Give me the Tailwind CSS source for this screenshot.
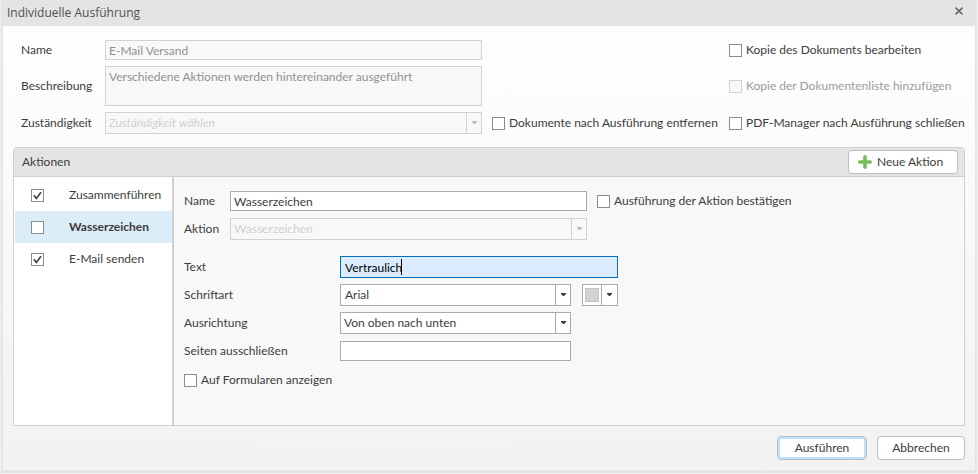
<!DOCTYPE html>
<html lang="de">
<head>
<meta charset="utf-8">
<title>Individuelle Ausführung</title>
<meta name="viewport" content="width=device-width, initial-scale=1">
<script src="https://cdn.jsdelivr.net/npm/@tailwindcss/browser@4"></script>
</head>
<body class="bg-[#f0f0f0] font-['Lato','Open_Sans',sans-serif] text-xs text-[#3c3c3c]">
<svg class="hidden" aria-hidden="true">
  <symbol id="arrow" viewBox="0 0 5 3"><path d="M0 0h5v1L3 3H2L0 1z" fill="currentColor"/></symbol>
</svg>
<div class="flex min-h-screen flex-col px-px pb-px">
<main class="flex flex-1 flex-col border-x-2 border-b-3 border-[#e4e4e4] bg-linear-to-b from-white to-[#f2f2f2]">
  <header class="flex h-[26px] items-center justify-between bg-[#e4e4e4] pr-2 pl-1 text-[#505050]">
    <h1 class="font-['Open_Sans','Noto_Sans',sans-serif]">Individuelle Ausführung</h1>
    <button type="button" aria-label="Schließen" class="mb-1 flex h-4 w-4 items-center justify-center">
      <svg class="h-2 w-2" viewBox="0 0 8 8"><path d="M.5.7l7 6.6M7.5.7L.5 7.3" stroke="#666" stroke-width="1.6"/></svg>
    </button>
  </header>

  <form class="flex flex-1 flex-col px-[10px] pb-[10px]">
    <div class="grid grid-cols-[84px_1fr_247px_236px] items-center gap-y-[6px] pt-[14px] pl-2">
      <label for="name">Name</label>
      <input id="name" disabled value="E-Mail Versand" class="h-5 w-full border border-[#d2d2d2] bg-[#f8f8f8] px-[3px] text-[#919191]">
      <label class="col-start-4 flex items-center gap-1 text-[#3c3c3c]">
        <input type="checkbox" class="h-[13px] w-[13px] appearance-none border border-[#8c8c8c] bg-white">Kopie des Dokuments bearbeiten</label>

      <label for="desc">Beschreibung</label>
      <textarea id="desc" disabled class="block h-10 w-full resize-none border border-[#d2d2d2] bg-[#f8f8f8] px-[3px] py-[2px] text-[#919191]">Verschiedene Aktionen werden hintereinander ausgeführt</textarea>
      <label class="col-start-4 flex items-center gap-1 text-[#9b9b9b]">
        <input type="checkbox" disabled class="h-[13px] w-[13px] appearance-none border border-[#d2d2d2] bg-[#f8f8f8]">Kopie der Dokumentenliste hinzufügen</label>

      <label for="resp">Zuständigkeit</label>
      <div class="relative">
        <select id="resp" disabled class="block h-[22px] w-full appearance-none border border-[#d2d2d2] bg-[#f8f8f8] px-[3px] text-[#d0d0d0] italic opacity-100"><option>Zuständigkeit wählen</option></select>
        <span class="pointer-events-none absolute inset-y-0 right-0 flex w-4 items-center justify-center border border-[#d2d2d2] pb-px text-[#bcbcbc]"><svg class="h-[3px] w-[5px]"><use href="#arrow"/></svg></span>
      </div>
      <label class="flex items-center gap-1 pl-[10px]">
        <input type="checkbox" class="h-[13px] w-[13px] shrink-0 appearance-none border border-[#8c8c8c] bg-white">Dokumente nach Ausführung entfernen</label>
      <label class="flex items-center gap-1 whitespace-nowrap">
        <input type="checkbox" class="h-[13px] w-[13px] shrink-0 appearance-none border border-[#8c8c8c] bg-white">PDF-Manager nach Ausführung schließen</label>
    </div>

    <section class="mt-[13px] flex flex-1 flex-col rounded-t border border-[#cfcfcf]">
      <div class="flex h-[29px] items-center justify-between rounded-t-[3px] border-b border-[#cfcfcf] bg-[#e4e4e4] pr-[6px] pl-2">
        <h2>Aktionen</h2>
        <button type="button" class="flex h-6 w-[110px] items-center gap-[5px] rounded border border-[#bebebe] bg-white pl-[9px]">
          <svg class="h-[14px] w-[14px]" viewBox="0 0 14 14"><path d="M7 1.8v10.4M1.8 7h10.4" stroke="#72bf58" stroke-width="3.6" stroke-linecap="round"/></svg>Neue Aktion</button>
      </div>
      <div class="flex flex-1">
        <ul class="w-[160px] shrink-0 border-r-2 border-[#cfcfcf] bg-white pt-[2px] pl-px">
          <li><label class="flex h-8 items-center gap-[25px] pl-4">
            <span class="grid h-[13px] w-[13px]"><input type="checkbox" checked class="col-start-1 row-start-1 h-[13px] w-[13px] appearance-none border border-[#8c8c8c] bg-white"><svg class="pointer-events-none col-start-1 row-start-1 h-[13px] w-[13px]" viewBox="0 0 13 13"><path d="M2.8 6.2l2.6 3.2 4.6-6.2" fill="none" stroke="#3c3c3c" stroke-width="1.6"/></svg></span>Zusammenführen</label></li>
          <li class="bg-[#dbedf9]"><label class="flex h-8 items-center gap-[25px] pl-4 font-bold">
            <input type="checkbox" class="h-[13px] w-[13px] appearance-none border border-[#8c8c8c] bg-white">Wasserzeichen</label></li>
          <li><label class="flex h-8 items-center gap-[25px] pl-4">
            <span class="grid h-[13px] w-[13px]"><input type="checkbox" checked class="col-start-1 row-start-1 h-[13px] w-[13px] appearance-none border border-[#8c8c8c] bg-white"><svg class="pointer-events-none col-start-1 row-start-1 h-[13px] w-[13px]" viewBox="0 0 13 13"><path d="M2.8 6.2l2.6 3.2 4.6-6.2" fill="none" stroke="#3c3c3c" stroke-width="1.6"/></svg></span>E-Mail senden</label></li>
        </ul>

        <div class="flex-1 bg-[#f8f8f8] pt-[14px] pl-[10px]">
          <div class="grid grid-cols-[46px_357px_1fr] items-center gap-y-[7px]">
            <label for="aname">Name</label>
            <input id="aname" value="Wasserzeichen" class="h-5 w-full border border-[#ababab] bg-white px-[3px]">
            <label class="flex items-center gap-1 pl-[10px]">
              <input type="checkbox" class="h-[13px] w-[13px] appearance-none border border-[#8c8c8c] bg-white">Ausführung der Aktion bestätigen</label>
            <label for="atype">Aktion</label>
            <div class="relative">
              <select id="atype" disabled class="block h-[22px] w-full appearance-none border border-[#d2d2d2] bg-[#f8f8f8] px-[3px] text-[#d0d0d0] opacity-100"><option>Wasserzeichen</option></select>
              <span class="pointer-events-none absolute inset-y-0 right-0 flex w-4 items-center justify-center border border-[#d2d2d2] pb-px text-[#bcbcbc]"><svg class="h-[3px] w-[5px]"><use href="#arrow"/></svg></span>
            </div>
          </div>

          <div class="mt-4 grid grid-cols-[156px_231px_1fr] items-center gap-y-[6px]">
            <label for="text">Text</label>
            <div class="relative col-span-2 w-[278px]">
              <input id="text" value="Vertraulich" class="block h-[22px] w-full border border-[#0072c0] bg-[#dbecfe] px-1 text-black caret-transparent outline-none">
              <span class="pointer-events-none absolute inset-y-[3px] left-[61px] w-px bg-black"></span>
            </div>
            <label for="font">Schriftart</label>
            <div class="relative">
              <select id="font" class="block h-[22px] w-full appearance-none border border-[#ababab] bg-white px-1"><option>Arial</option></select>
              <span class="pointer-events-none absolute inset-y-0 right-0 flex w-4 items-center justify-center border border-[#ababab] pb-px text-[#3c3c3c]"><svg class="h-[3px] w-[5px]"><use href="#arrow"/></svg></span>
            </div>
            <button type="button" aria-label="Schriftfarbe" class="ml-[11px] flex h-[22px] w-9 border border-[#ababab] bg-white">
              <span class="m-[2px] mt-[3px] h-[14px] w-[14px] border border-[#c4c4c4] bg-[#d2d2d2]"></span>
              <span class="flex h-full flex-1 items-center justify-center border-l border-[#ababab] pb-px"><svg class="h-[3px] w-[5px]"><use href="#arrow"/></svg></span>
            </button>
            <label for="align">Ausrichtung</label>
            <div class="relative">
              <select id="align" class="block h-[22px] w-full appearance-none border border-[#ababab] bg-white px-[3px]"><option>Von oben nach unten</option></select>
              <span class="pointer-events-none absolute inset-y-0 right-0 flex w-4 items-center justify-center border border-[#ababab] pb-px text-[#3c3c3c]"><svg class="h-[3px] w-[5px]"><use href="#arrow"/></svg></span>
            </div>
            <label for="pages" class="col-start-1">Seiten ausschließen</label>
            <input id="pages" class="my-px h-5 w-full border border-[#ababab] bg-white px-[3px]">
          </div>
          <label class="mt-[10px] flex items-center gap-1">
            <input type="checkbox" class="h-[13px] w-[13px] appearance-none border border-[#8c8c8c] bg-white">Auf Formularen anzeigen</label>
        </div>
      </div>
    </section>

    <footer class="mt-[10px] flex justify-end gap-[10px]">
      <button type="button" class="h-6 w-[90px] rounded border border-[#bebebe] bg-white inset-ring-2 inset-ring-[#bce1f8]">Ausführen</button>
      <button type="button" class="h-6 w-[88px] rounded border border-[#bebebe] bg-white">Abbrechen</button>
    </footer>
  </form>
</main>
</div>
</body>
</html>
